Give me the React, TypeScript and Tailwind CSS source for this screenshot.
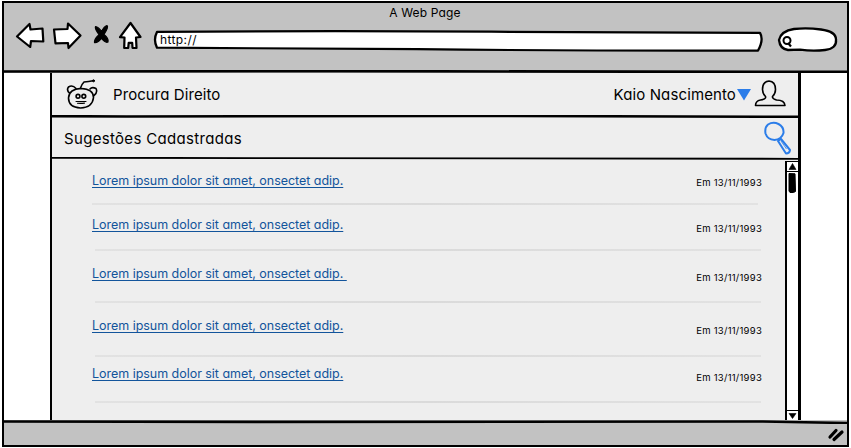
import React from "react";

const items = [
  { text: "Lorem ipsum dolor sit amet, onsectet adip.", row: "h-[43px]", link: "mt-[14px]", date: "mt-[17px]", rule: "ml-[40px] w-[666px]" },
  { text: "Lorem ipsum dolor sit amet, onsectet adip.", row: "h-[44px]", link: "mt-[13px]", date: "mt-[18px]", rule: "ml-[43px] w-[666px]" },
  { text: "Lorem ipsum dolor sit amet, onsectet adip.\u00a0", row: "h-[50px]", link: "mt-[16px]", date: "mt-[21px]", rule: "ml-[43px] w-[666px]" },
  { text: "Lorem ipsum dolor sit amet, onsectet adip.", row: "h-[52px]", link: "mt-[16px]", date: "mt-[22px]", rule: "ml-[43px] w-[666px]" },
  { text: "Lorem ipsum dolor sit amet, onsectet adip.", row: "h-[44px]", link: "mt-[10px]", date: "mt-[15px]", rule: "ml-[43px] w-[666px]" },
];

/* Slightly uneven pen stroke used for the horizontal dividers. */
function Stroke({ className, d, width = 2.6 }: { className: string; d: string; width?: number }) {
  return (
    <svg className={className} viewBox="0 0 100 4" preserveAspectRatio="none" fill="none" stroke="#000">
      <path d={d} strokeWidth={width} vectorEffect="non-scaling-stroke" />
    </svg>
  );
}

function Toolbar() {
  return (
    <div className="relative flex h-[67px] bg-[#c2c2c2]">
      <div className="absolute top-[2px] left-0 w-full pr-[1px] text-center text-[12px] leading-[16px] tracking-[0.15px]">A Web Page</div>
      <svg className="mt-[16px] ml-[8px] h-[34px] w-[134px] shrink-0" viewBox="12 19 134 34" fill="#fff" stroke="#000" strokeWidth="2.200" strokeLinejoin="round">
        <path d="M17 36.500 29.500 24l1 5.500 12-1 .8 13-12.300-.5-.8 6Z" />
        <path d="M54 29.500 67.500 29l.5-5.500L80.500 35.500 68.500 48l-.5-5-12.500.3Z" />
        <path d="M95.500 26.500q3 .3 6 5 2.500-5 5.500-6 2 1-3 9 5 4 4 7.500-2.500 1.500-6.500-3.800-3.500 4.800-7 4.400-.5-3.500 4.500-8-4.500-6-3.500-8.100Z" fill="#000" strokeWidth="1.200" />
        <path d="m130.500 23 10 14-4.500.5.500 10.500-4-.2-.3-5h-3.500l-.5 5-4 .2.3-10.500-4.500-.3Z" />
      </svg>
      <div className="relative mt-[27px] ml-[7px] h-[22px] w-[611px] shrink-0">
        <svg className="absolute inset-0 h-full w-full" viewBox="0 0 614 23" preserveAspectRatio="none" fill="#fff" stroke="#000" strokeWidth="2.300" strokeLinejoin="round">
          <path d="M4 2Q170 .5 340 1.800L610 3Q614 10 608 21.500Q430 22 265 20L4 18.500Q0 10 4 2Z" />
        </svg>
        <span className="absolute top-[2px] left-[7px] text-[12px] leading-[16px] tracking-[0.4px]">http://</span>
      </div>
      <svg className="mt-[23px] ml-[12px] h-[30px] w-[64px] shrink-0" viewBox="776 26 64 30" fill="#fff" stroke="#000" strokeWidth="2.300">
        <path d="M779 40q2-9 15-11 13-1.500 27 .5 15 2 15 10 1 9-11 10.500-12 1.500-25-.3l-12 .3q-8-1-9-10Z" />
        <circle cx="787" cy="40.500" r="3.500" strokeWidth="2" />
        <path d="m788 43 3 3.500" strokeWidth="2.200" />
      </svg>
    </div>
  );
}

function Brand() {
  return (
    <svg className="h-[32px] w-[34px]" viewBox="65 78 34 32" fill="#eee" stroke="#000" strokeWidth="1.600" strokeLinecap="round" strokeLinejoin="round">
      <path d="M70 93.500q-4-3-1.500-6.500 4-2.500 7.500 1.500M90 89q2-2.500 6-.5 2 4-2 7" />
      <path d="M68.500 98q.5-9 12.500-9.500 12.500.5 12.500 9-1 10-13 10.500-12-.8-12-10Z" />
      <path d="M80.500 88q1-3.500 3.500-6 4.500-.500 9-1.300" fill="none" />
      <circle cx="93.500" cy="80.800" r="1" fill="#000" strokeWidth="1" />
      <circle cx="78" cy="96.300" r="1.900" /><circle cx="83.800" cy="96.300" r="1.900" />
      <path d="M76 101.500h10M77.500 103.300q4 .3 7-.2" fill="none" strokeWidth="1.100" />
    </svg>
  );
}

function ScrollBar() {
  return (
    <div className="mt-[1px] flex h-[260px] w-[13px] shrink-0 flex-col border-l-2 border-black bg-white">
      <svg className="h-[11px] w-full border-y-[1.5px] border-black" viewBox="0 0 11 8"><path d="m5.500 1 3.500 6H2Z" stroke="#000" strokeWidth=".6" /></svg>
      <svg className="h-[22px] w-full" viewBox="0 0 11 22"><path d="m2 1.500 6 .3.500 17.700q-1.500 1.500-5.500 1l-1-1.500Z" stroke="#000" strokeLinejoin="round" /></svg>
      <div className="grow" />
      <svg className="h-[11px] w-full border-y-[1.5px] border-black" viewBox="0 0 11 8"><path d="m5.500 7 3.500-5H2Z" stroke="#000" strokeWidth=".6" /></svg>
    </div>
  );
}

export default function App() {
  return (
    <div className="h-[448px] w-[851px] overflow-hidden bg-white pt-[1px] pl-[2px] font-['Inter','Open_Sans',sans-serif] font-[430] text-black [font-feature-settings:'cv11']">
      <div className="flex h-[446px] w-[847px] flex-col border-2 border-black">
        <Toolbar />
        <Stroke className="h-[3px] w-full shrink-0 bg-[#c2c2c2]" d="M0 2 40 1.500 75 2.200 100 2.500" />
        <main className="flex h-[347px] shrink-0 justify-start">
          <section className="ml-[46px] flex w-[751px] flex-col border-r-[3px] border-l-2 border-black bg-[#eee]">
            <header className="flex h-[42px] shrink-0 items-center">
              <div className="ml-[13px] shrink-0"><Brand /></div>
              <h1 className="mt-[2px] ml-[14px] text-[15px] font-[420] tracking-[0.08px]">Procura Direito</h1>
              <span className="mt-[2px] ml-auto text-[15px] font-[420] tracking-[0.12px]">Kaio Nascimento</span>
              <svg className="h-[14px] w-[16px]" viewBox="0 0 16 14"><path d="M1 2h14L8 13.500Z" fill="#2b7de9" /></svg>
              <svg className="mr-[12px] ml-[2px] h-[30px] w-[32px]" viewBox="754 79 32 30" fill="none" stroke="#000" strokeWidth="1.600" strokeLinejoin="round">
                <path d="M755.500 105.500q0-4.500 5-5.500 6-1 5-3.500-3-3-3-7 0-8 6.500-8.500 6.500.5 6.500 8.500 0 4-3 7-.5 2 4 3.500 8 0 8.500 5.500Z" />
              </svg>
            </header>
            <Stroke className="h-[3px] w-full shrink-0" d="M0 1.500 10 2 55 1.200 100 2.400" />
            <div className="flex h-[39px] shrink-0 items-center">
              <h2 className="mt-[3px] ml-[12px] text-[15px] font-[420] tracking-[0.32px]">Sugestões Cadastradas</h2>
              <svg className="mr-[7px] ml-auto h-[34px] w-[30px]" viewBox="762 121 30 34" fill="none" stroke="#2b7de9" strokeWidth="2" strokeLinejoin="round">
                <path d="M769 124.500q5-3 10.500-.5 5.500 3 5 9-2 6.500-9 7-7-.5-9-6.500-1-6 2.500-9Z" />
                <path d="m779 141 3-2 9 11q-.5 3.500-4 3.500Z" /><path d="m782 141 5.500 8" strokeWidth=".8" />
              </svg>
            </div>
            <Stroke className="h-[3px] w-full shrink-0" d="M0 1 30 1.500 60 1.800 100 2.500" width={1.9} />
            <div className="flex h-[260px]">
              <ul className="grow">
                {items.map((item, i) => (
                  <li key={i}>
                    <div className={`flex items-start justify-between pr-[23px] pl-[40px] ${item.row}`}>
                      <a className={`text-[12.5px] leading-[14px] tracking-[-0.03px] text-[#12549b] underline decoration-1 underline-offset-[2px] [text-decoration-skip-ink:none] ${item.link}`}>{item.text}</a>
                      <time className={`text-[9.5px] leading-[12px] tracking-[0.24px] ${item.date}`}>Em 13/11/1993</time>
                    </div>
                    <div className={`h-[2px] bg-gradient-to-r from-[#e2e2e2] via-[#dadada] to-[#e2e2e2] ${item.rule}`} />
                  </li>
                ))}
              </ul>
              <ScrollBar />
            </div>
          </section>
        </main>
        <Stroke className="h-[4px] w-full shrink-0 bg-[#c2c2c2]" d="M0 1.500 30 1.900 90 1.500 100 3" />
        <footer className="flex grow items-end justify-end bg-[#c2c2c2]">
          <svg className="mr-[2px] mb-[2px] h-[16px] w-[18px]" viewBox="827 428 18 16" stroke="#000" strokeWidth="3.200" strokeLinecap="round">
            <path d="m830 438 6-6.500M834 440.500l8-7.500" />
          </svg>
        </footer>
      </div>
    </div>
  );
}
